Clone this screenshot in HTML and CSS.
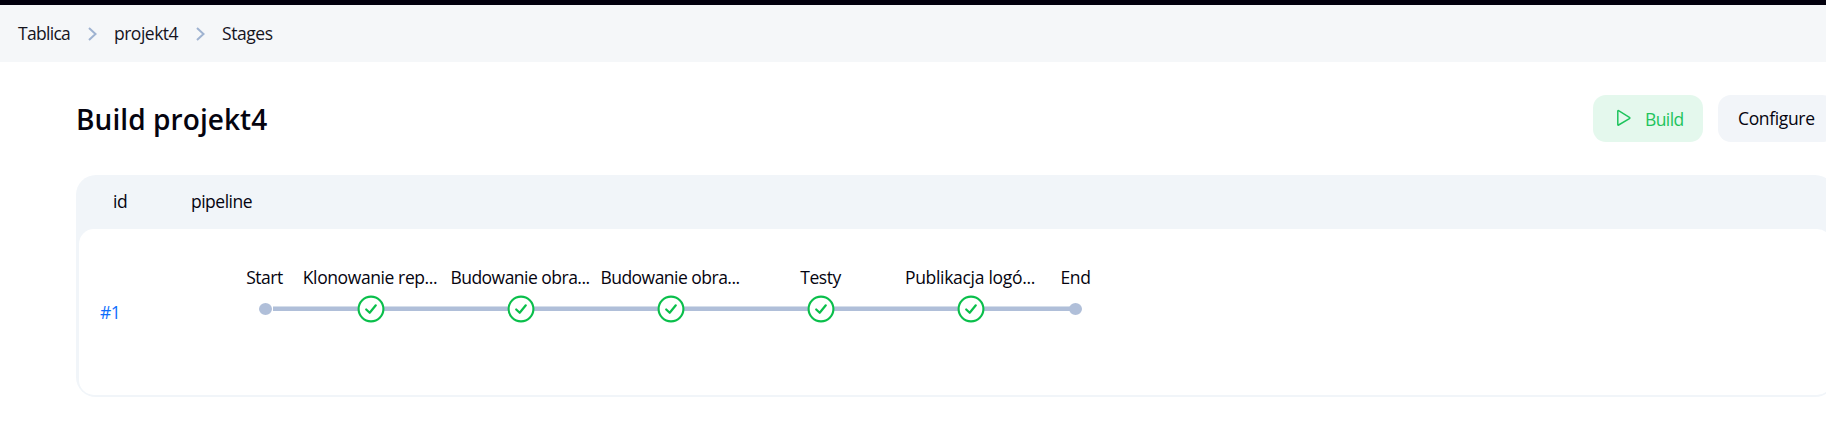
FILE: index.html
```html
<!DOCTYPE html>
<html lang="pl">
<head>
<meta charset="utf-8">
<title>Build projekt4</title>
<link rel="stylesheet" href="styles.css">
</head>
<body>
<svg class="defs" width="0" height="0">
  <symbol id="chevron" viewBox="0 0 9 14"><path d="M1 1l6.5 6L1 13" fill="none" stroke="#9fb3d1" stroke-width="2"/></symbol>
  <symbol id="check" viewBox="0 0 28 28"><circle cx="14" cy="14" r="12.4" fill="#fff" stroke="#0abf4b" stroke-width="2.1"/><path d="M9.2 14.5l3.5 3.3 6.1-7.5" fill="none" stroke="#0abf4b" stroke-width="2.2" stroke-linecap="round" stroke-linejoin="round"/></symbol>
</svg>
<nav class="breadcrumb">
  <a class="crumb crumb-home">Tablica</a>
  <svg class="chevron"><use href="#chevron"/></svg>
  <a class="crumb crumb-project">projekt4</a>
  <svg class="chevron"><use href="#chevron"/></svg>
  <a class="crumb crumb-page">Stages</a>
</nav>
<main class="page">
  <header class="heading">
    <h1 class="title">Build projekt4</h1>
    <a class="button button-build">
      <svg class="play" viewBox="0 0 16 18"><path d="M1.8 2.2v13.3q0 .9.8.5L13.4 9.6q.9-.6 0-1.2L2.6 1.7q-.8-.4-.8.5z" fill="none" stroke="#1ec45d" stroke-width="1.5"/></svg>
      <span class="build-text">Build</span>
    </a>
    <a class="button button-configure"><span class="configure-text">Configure</span></a>
  </header>
  <section class="table">
    <div class="table-head"><span class="col-id">id</span><span class="col-pipeline">pipeline</span></div>
    <div class="table-row">
      <a class="run">#1</a>
      <div class="pipeline">
        <div class="stage terminal first"><span class="label start">Start</span><div class="track"><i class="dot"></i></div></div>
        <div class="stage"><span class="label clone">Klonowanie rep...</span><div class="track"><svg class="check"><use href="#check"/></svg></div></div>
        <div class="stage"><span class="label image">Budowanie obra...</span><div class="track"><svg class="check"><use href="#check"/></svg></div></div>
        <div class="stage"><span class="label image">Budowanie obra...</span><div class="track"><svg class="check"><use href="#check"/></svg></div></div>
        <div class="stage"><span class="label tests">Testy</span><div class="track"><svg class="check"><use href="#check"/></svg></div></div>
        <div class="stage"><span class="label publish">Publikacja logó...</span><div class="track"><svg class="check"><use href="#check"/></svg></div></div>
        <div class="stage terminal last"><span class="label end">End</span><div class="track"><i class="dot"></i></div></div>
      </div>
    </div>
  </section>
</main>
</body>
</html>
```
FILE: styles.css
```css
* { box-sizing: border-box; }
body {
  margin: 0;
  height: 431px;
  overflow: hidden;
  background: #fff;
  color: #05040f;
  font: 17.5px/24px "Segoe UI", "Open Sans", sans-serif;
  letter-spacing: -0.6px;
  white-space: nowrap;
}
.defs { display: block; }
.breadcrumb {
  display: flex;
  align-items: center;
  height: 62px;
  padding: 0 0 0 18px;
  border-top: 5px solid #02000d;
  background: #f5f7f9;
}
.crumb { padding-bottom: 2px; color: #15141d; }
.crumb-home { width: 70px; letter-spacing: -0.7px; }
.crumb-project { width: 82px; letter-spacing: -0.5px; }
.crumb-page { letter-spacing: -0.45px; }
.crumb-home, .crumb-project, .crumb-page { flex: none; }
.chevron { width: 9px; height: 14px; margin-right: 17px; }
.page { width: 1835px; padding: 33px 0 0 76px; }
.heading { display: flex; height: 47px; margin-bottom: 33px; }
.title {
  flex: 1;
  margin: 0;
  font-size: 28px;
  line-height: 49px;
  font-weight: 600;
  letter-spacing: 0.08px;
}
.button {
  display: flex;
  align-items: center;
  height: 47px;
  border-radius: 13px;
}
.button-build { width: 110px; padding-left: 23px; margin-right: 15px; background: #e4f8ed; color: #1ec45d; }
.play { width: 16px; height: 18px; margin: 0 13px 1px 0; }
.button-configure { width: 117px; padding: 0 0 2px 20px; background: #f2f5f9; letter-spacing: -0.35px; }
.table {
  height: 222px;
  padding: 0 3px 2px;
  border-radius: 20px;
  background: #f1f5f9;
}
.table-head { display: flex; height: 54px; padding: 14px 0 0 34px; }
.col-id { width: 78px; letter-spacing: -0.4px; }
.col-pipeline { letter-spacing: -0.5px; }
.table-row {
  display: flex;
  height: 166px;
  border-radius: 15px;
  background: #fff;
}
.run { width: 153px; padding: 71px 0 0 21px; color: #0d6efd; }
.pipeline { display: flex; padding-top: 36px; }
.stage { width: 150px; text-align: center; }
.label { display: block; height: 24px; }
.start { padding-left: 1px; letter-spacing: -0.45px; }
.clone { padding-right: 2px; letter-spacing: -0.4px; }
.image { padding-right: 2px; letter-spacing: -0.52px; }
.tests { padding-right: 1px; letter-spacing: -0.5px; }
.publish { padding-right: 2px; letter-spacing: -0.3px; }
.end { padding-right: 5px; letter-spacing: -0.45px; }
.track {
  display: flex;
  align-items: center;
  justify-content: center;
  height: 28px;
  margin-top: 6px;
  background: linear-gradient(#d5deea 0 1px, #b0bfd9 1px) 0 11px / 100% 5px no-repeat;
}
.check { width: 28px; height: 28px; }
.terminal { width: 64px; }
.dot { width: 13px; height: 12px; border-radius: 50%; background: #b0bfd9; }
.first .track { justify-content: flex-start; padding-left: 27px; background-position: 41px 11px; }
.last .track { justify-content: flex-start; padding-left: 23px; background-size: 30px 5px; }
```
